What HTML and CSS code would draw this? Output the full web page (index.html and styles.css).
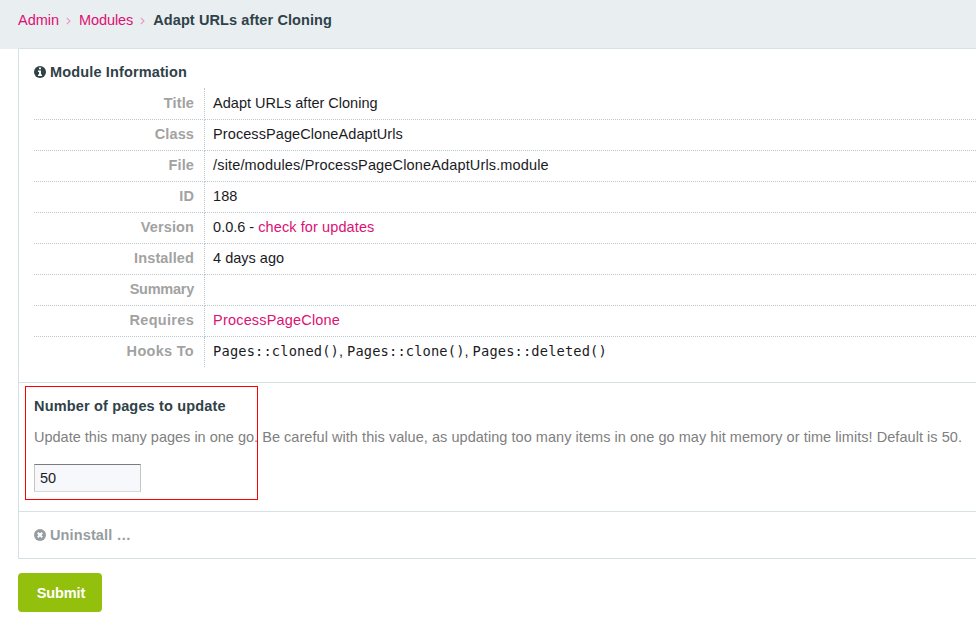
FILE: index.html
```html
<!DOCTYPE html>
<html lang="en">
<head>
<meta charset="utf-8">
<title>Adapt URLs after Cloning</title>
<link rel="stylesheet" href="styles.css">
</head>
<body>
<header class="masthead">
  <nav class="breadcrumbs">
    <a class="crumb-admin" href="#">Admin</a>
    <svg class="chevron" viewBox="0 0 5 8"><path d="M.8 .8 4 4 .8 7.2"/></svg>
    <a class="crumb-modules" href="#">Modules</a>
    <svg class="chevron" viewBox="0 0 5 8"><path d="M.8 .8 4 4 .8 7.2"/></svg>
    <strong class="crumb-current">Adapt URLs after Cloning</strong>
  </nav>
</header>
<main>
  <form class="fields">
    <section class="field info">
      <h2 class="label"><svg class="icon" viewBox="0 0 12 12"><circle cx="6" cy="6" r="6"/><path class="cut" d="M5 1.5h2v1.7H5zM4 4.5h3v4h1V10H4V8.5h1V6H4z"/></svg><span class="t-info">Module Information</span></h2>
      <table class="details">
        <tr><th>Title</th><td>Adapt URLs after Cloning</td></tr>
        <tr><th>Class</th><td class="class-name">ProcessPageCloneAdaptUrls</td></tr>
        <tr><th>File</th><td class="file-path">/site/modules/ProcessPageCloneAdaptUrls.module</td></tr>
        <tr><th>ID</th><td>188</td></tr>
        <tr><th>Version</th><td>0.0.6 - <a class="check" href="#">check for updates</a></td></tr>
        <tr><th>Installed</th><td>4 days ago</td></tr>
        <tr><th class="summary">Summary</th><td></td></tr>
        <tr><th class="wide">Requires</th><td><a class="requires" href="#">ProcessPageClone</a></td></tr>
        <tr><th class="wide">Hooks To</th><td><code>Pages::cloned()</code>, <code>Pages::clone()</code>, <code>Pages::deleted()</code></td></tr>
      </table>
    </section>
    <section class="field count">
      <h2 class="label t-count">Number of pages to update</h2>
      <p class="description"><span class="lead">Update this many pages in one go.</span> Be careful with this value, as updating too many items in one go may hit memory or time limits! Default is 50.</p>
      <input type="text" value="50">
      <span class="highlight"></span>
    </section>
    <section class="field uninstall">
      <h2 class="label"><svg class="icon" viewBox="0 0 12 12"><circle cx="6" cy="6" r="6"/><path class="cross" d="M3.8 3.8l4.4 4.4M8.2 3.8 3.8 8.2"/></svg><span class="t-uninstall">Uninstall …</span></h2>
    </section>
  </form>
  <button class="submit" type="button">Submit</button>
</main>
</body>
</html>
```
FILE: styles.css
```css
* { box-sizing: border-box; }
body {
  margin: 0;
  background: #fff;
  color: #1b1b1f;
  font: 14.5px/20px "Liberation Sans", Arial, sans-serif;
  overflow: hidden;
}
a { color: #db1174; text-decoration: none; }
.masthead { height: 49px; padding: 10px 18px; background: #e9eef1; }
.breadcrumbs { display: flex; align-items: center; white-space: nowrap; }
.crumb-modules { letter-spacing: -.1px; }
.chevron { width: 5px; height: 8px; margin: 1px 8px 0 7px; fill: none; stroke: #eb95c0; stroke-width: 1.1; }
.crumb-current { color: #2f4248; letter-spacing: .1px; }
main { padding-left: 18px; }
.fields { margin-top: -1px; border: 1px solid #d6e1e6; border-right: 0; }
.field { position: relative; padding-left: 15px; }
.field + .field { border-top: 1px solid #d6e1e6; }
.label { display: flex; align-items: center; margin: 0; font-size: 14.5px; line-height: 20px; color: #2f4248; }
.t-info { letter-spacing: .14px; }
.t-count { letter-spacing: .16px; }
.t-uninstall { letter-spacing: .12px; }
.icon { width: 12px; height: 12px; margin-right: 4px; fill: currentColor; }
.icon .cut { fill: #fff; }
.icon .cross { stroke: #fff; stroke-width: 2; }
.info { height: 333px; padding-top: 13px; }
.details { width: 100%; margin-top: 6px; border-collapse: collapse; }
.details th, .details td { height: 31px; padding: 0 0 2px 8.6px; border-bottom: 1px dotted #b9c9cf; text-align: left; white-space: nowrap; }
.details th { width: 170px; padding: 0 9.5px 2px 0; border-right: 1px dotted #b9c9cf; text-align: right; color: #a2a2a2; letter-spacing: .12px; }
.details tr:first-child th, .details tr:first-child td { padding-bottom: 1px; }
.details .summary { letter-spacing: -.25px; }
.details .wide { letter-spacing: .3px; }
.details tr:last-child th, .details tr:last-child td { border-bottom: 0; }
.class-name { letter-spacing: .08px; }
.file-path { letter-spacing: .15px; }
.requires { letter-spacing: .18px; }
.check { letter-spacing: .1px; }
code { font: 13.7px/20px "DejaVu Sans Mono", monospace; letter-spacing: .152px; }
.count { height: 129px; padding-top: 13px; }
.description { margin: 11px 0 17px; color: #808080; white-space: nowrap; letter-spacing: .047px; }
.lead { letter-spacing: 0; }
input {
  display: block;
  width: 107px;
  height: 28px;
  padding: 0 5px;
  border: 1px solid;
  border-color: #7c7c7c #c5c5c5 #d8d8d8 #c5c5c5;
  background: #f7f8fb;
  color: #1b1b1f;
  font: inherit;
}
.highlight { position: absolute; left: 6px; top: 3px; width: 233px; height: 114px; border: 1px solid #f00; }
.uninstall { height: 47px; padding-top: 13px; }
.uninstall .label { color: #969da1; }
.submit {
  display: block;
  width: 84px;
  height: 39px;
  margin-top: 14px;
  padding: 0 0 0 2px;
  border: 0;
  border-radius: 4px;
  background: #93bf0d;
  color: #fff;
  font: bold 14.5px "Liberation Sans", Arial, sans-serif;
  letter-spacing: -.1px;
}
```
